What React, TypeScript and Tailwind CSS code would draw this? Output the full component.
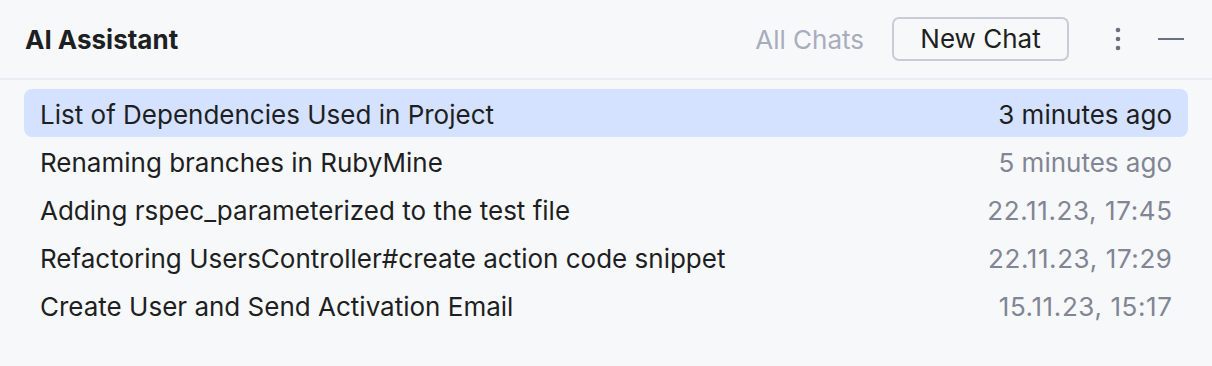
const chats = [
  { title: 'List of Dependencies Used in Project', time: '3 minutes ago', selected: true },
  { title: 'Renaming branches in RubyMine', time: '5 minutes ago' },
  { title: 'Adding rspec_parameterized to the test file', time: '22.11.23, 17:45', date: true },
  { title: 'Refactoring UsersController#create action code snippet', time: '22.11.23, 17:29', date: true },
  { title: 'Create User and Send Activation Email', time: '15.11.23, 15:17', date: true },
];

export default function App() {
  return (
    <div className="w-[1212px] h-[366px] bg-[#f7f8fa] font-['Inter',sans-serif] text-[#1e1f22] overflow-hidden">
      <header className="h-[80px] flex items-center pl-[25px] pr-[28px] border-b-2 border-[#ebecf0]">
        <h1 className="text-[26px] font-bold pt-[1px]">AI Assistant</h1>
        <div className="ml-auto flex items-center">
          <span className="text-[26px] text-[#a8adbd] mr-[28px]">All Chats</span>
          <button className="h-[44px] w-[177px] border-2 border-[#c9ccd6] rounded-[7px] text-[26px] bg-[#f7f8fa] pb-[1px]">
            New Chat
          </button>
          <svg width="8" height="26" viewBox="0 0 8 26" className="ml-[45px] text-[#6c707e]">
            <circle cx="4" cy="4" r="2.3" fill="currentColor" />
            <circle cx="4" cy="13" r="2.3" fill="currentColor" />
            <circle cx="4" cy="22" r="2.3" fill="currentColor" />
          </svg>
          <div className="ml-[36px] w-[26px] h-[2px] bg-[#6c707e]" />
        </div>
      </header>
      <ul className="px-[24px] pt-[9px]">
        {chats.map((c) => (
          <li
            key={c.title}
            className={`h-[48px] flex items-center justify-between px-[16px] pt-[2px] rounded-[8px] text-[26px] ${
              c.selected ? 'bg-[#d4e2ff]' : ''
            }`}
          >
            <span>{c.title}</span>
            <span
              className={`${c.date ? 'tracking-[0.6px] -mr-[0.6px]' : ''} ${
                c.selected ? 'text-[#1e1f22]' : 'text-[#818594]'
              }`}
            >
              {c.time}
            </span>
          </li>
        ))}
      </ul>
    </div>
  );
}
